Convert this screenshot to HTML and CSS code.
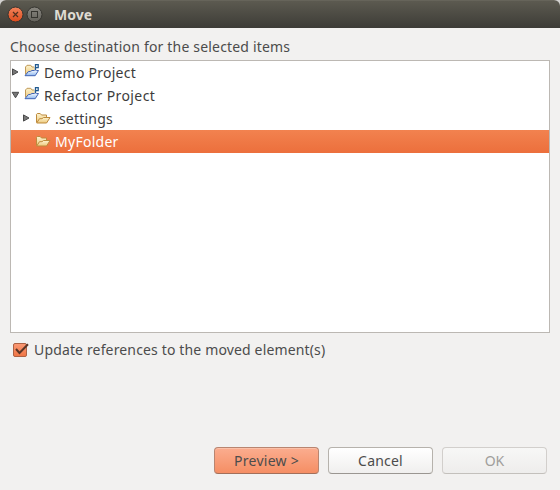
FILE: index.html
```html
<!DOCTYPE html>
<html lang="en">
<head>
<meta charset="utf-8">
<title>Move</title>
<link rel="stylesheet" href="styles.css">
</head>
<body>
<svg class="defs" width="0" height="0" aria-hidden="true">
  <defs>
    <linearGradient id="tan" x1="0" y1="0" x2="0" y2="1"><stop offset="0" stop-color="#fdf3cf"/><stop offset="1" stop-color="#edc97c"/></linearGradient>
    <linearGradient id="blue" x1="0" y1="0" x2="0" y2="1"><stop offset="0" stop-color="#f2f8ff"/><stop offset="1" stop-color="#8eb7ee"/></linearGradient>
    <symbol id="project" viewBox="0 0 16 16">
      <path d="M1.5 11.5V4L3 2.3H6.8L8 4H10.5V8" fill="url(#tan)" stroke="#c09a58"/>
      <path d="M1 12.7L4.3 8.6Q6.5 8.8 8 7.5H14.5L11.2 12.7Z" fill="url(#blue)" stroke="#4264b4" stroke-linejoin="round"/>
      <path d="M10.4 1H15V6H12.5V7.5H10.4Z" fill="#fff"/>
      <path d="M11.5 7V1.7H14.2V4.6H11.5" fill="none" stroke="#21598f" stroke-width="1.3"/>
    </symbol>
    <symbol id="folder" viewBox="0 0 16 16">
      <path d="M1.5 12.5V4.3L2.3 3.5H5.2L6.5 5H11.5V8" fill="url(#tan)" stroke="#bd8a3c"/>
      <path d="M1.7 13L4.5 8.7H7L8.5 7.5H15L11.6 13Z" fill="url(#tan)" stroke="#bd8a3c" stroke-linejoin="round"/>
    </symbol>
    <symbol id="closed" viewBox="0 0 8 8"><path d="M1.5 .9L7 4L1.5 7.1Z" fill="#777" stroke="#4a4a4a"/></symbol>
    <symbol id="open" viewBox="0 0 8 8"><path d="M1.2 1.3H7.8L4.5 6.8Z" fill="#777" stroke="#4a4a4a"/></symbol>
  </defs>
</svg>
<div class="dialog">
  <header class="titlebar">
    <svg class="controls" width="38" height="18" viewBox="0 0 38 18">
      <defs>
        <linearGradient id="close" x1="0" y1="0" x2="0" y2="1"><stop offset="0" stop-color="#f4845c"/><stop offset="1" stop-color="#dd4b1c"/></linearGradient>
        <linearGradient id="max" x1="0" y1="0" x2="0" y2="1"><stop offset="0" stop-color="#898780"/><stop offset="1" stop-color="#62605a"/></linearGradient>
      </defs>
      <circle cx="9.5" cy="8.5" r="7.5" fill="url(#close)" stroke="#35342f"/>
      <path d="M7 6L12 11M12 6L7 11" stroke="#51301f" stroke-width="1.2"/>
      <circle cx="28.5" cy="8.5" r="7.5" fill="url(#max)" stroke="#35342f"/>
      <rect x="25.5" y="5.5" width="6" height="6" fill="none" stroke="#35342f"/>
    </svg>
    <h1 class="title">Move</h1>
  </header>
  <main class="content">
    <p class="label"><span class="t-choose">Choose destination for the selected items</span></p>
    <ul class="tree">
      <li class="row"><svg class="arrow"><use href="#closed"/></svg><svg class="icon"><use href="#project"/></svg><span class="t-demo">Demo Project</span></li>
      <li class="row"><svg class="arrow"><use href="#open"/></svg><svg class="icon"><use href="#project"/></svg><span class="t-refactor">Refactor Project</span></li>
      <li class="row nested"><svg class="arrow"><use href="#closed"/></svg><svg class="icon"><use href="#folder"/></svg><span class="t-settings">.settings</span></li>
      <li class="row nested selected"><svg class="arrow"></svg><svg class="icon"><use href="#folder"/></svg><span class="t-folder">MyFolder</span></li>
    </ul>
    <div class="option">
      <svg class="check" width="18" height="16" viewBox="0 0 18 16">
        <defs><linearGradient id="box" x1="0" y1="0" x2="0" y2="1"><stop offset="0" stop-color="#fb9a76"/><stop offset="1" stop-color="#ef7443"/></linearGradient></defs>
        <rect x="1.5" y="1.5" width="13" height="13" rx="1.5" fill="url(#box)" stroke="#ad6245"/>
        <path d="M4 7L7.5 11L16 2.3" fill="none" stroke="#5a3526" stroke-width="2"/>
      </svg>
      <span class="t-update">Update references to the moved element(s)</span>
    </div>
  </main>
  <footer class="buttons">
    <button class="button primary"><span class="t-preview">Preview &gt;</span></button>
    <button class="button"><span class="t-cancel">Cancel</span></button>
    <button class="button" disabled><span class="t-ok">OK</span></button>
  </footer>
</div>
</body>
</html>
```
FILE: styles.css
```css
* { box-sizing: border-box; }
body { margin: 0; background: #d3d2d0; color: #4c4c4c; font: 14px/20px "Noto Sans", "Open Sans", sans-serif; }
.defs { position: absolute; }
.dialog { width: 560px; height: 490px; display: flex; flex-direction: column; background: #f2f1f0; border-radius: 6px 6px 0 0; overflow: hidden; }
.titlebar { height: 28px; flex: none; display: flex; align-items: center; padding: 1px 0 0 6px; background: linear-gradient(#5c5a50, #3d3c37); border-top: 1px solid #66645a; }
.controls { flex: none; }
.title { margin: 0 0 0 10px; font-size: 14px; line-height: 20px; font-weight: 700; color: #dfdbd2; }
.content { padding: 9px 10px 0; flex: 1; }
.label { margin: 0; height: 23px; }
.tree { list-style: none; margin: 0; padding: 0; height: 273px; background: #fff; border: 1px solid #bcb8b3; color: #3c3c3c; }
.row { height: 23px; display: flex; align-items: center; line-height: 23px; }
.row.nested { padding-left: 11px; }
.row.selected { color: #fff; background: linear-gradient(#f2824f, #ec6f3c); }
.arrow { width: 8px; height: 8px; flex: none; margin-bottom: 2px; }
.icon { width: 16px; height: 16px; margin: 0 4px 3px 5px; flex: none; }
.nested .icon { margin-bottom: 1px; }
.option { display: flex; align-items: center; height: 20px; margin-top: 7px; }
.check { margin: 0 4px 0 2px; }
.buttons { display: flex; justify-content: flex-end; gap: 9px; padding: 0 13px 16px 0; }
.button { width: 105px; height: 27px; padding: 0; font: inherit; color: #4c4c4c; border: 1px solid #b6b2ac; border-bottom-color: #9a9691; border-radius: 4px; background: linear-gradient(#fff, #f0efee); }
.button.primary { border-color: #b98570; border-bottom-color: #a26f5a; background: linear-gradient(#fbad8f, #f58e64); box-shadow: inset 0 1px #fcc0a8; }
.button:disabled { color: #a09e9b; border-color: #d2cfcc; border-bottom-color: #c3c0bc; background: linear-gradient(#f7f7f6, #eeedec); }
.t-choose { letter-spacing: .18px; }
.t-update { letter-spacing: .15px; }
.t-demo { letter-spacing: .25px; }
.t-refactor { letter-spacing: .41px; }
.t-settings { letter-spacing: .2px; }
.t-folder { letter-spacing: .27px; }
.t-preview { letter-spacing: .25px; }
.t-cancel { letter-spacing: .2px; }
```
